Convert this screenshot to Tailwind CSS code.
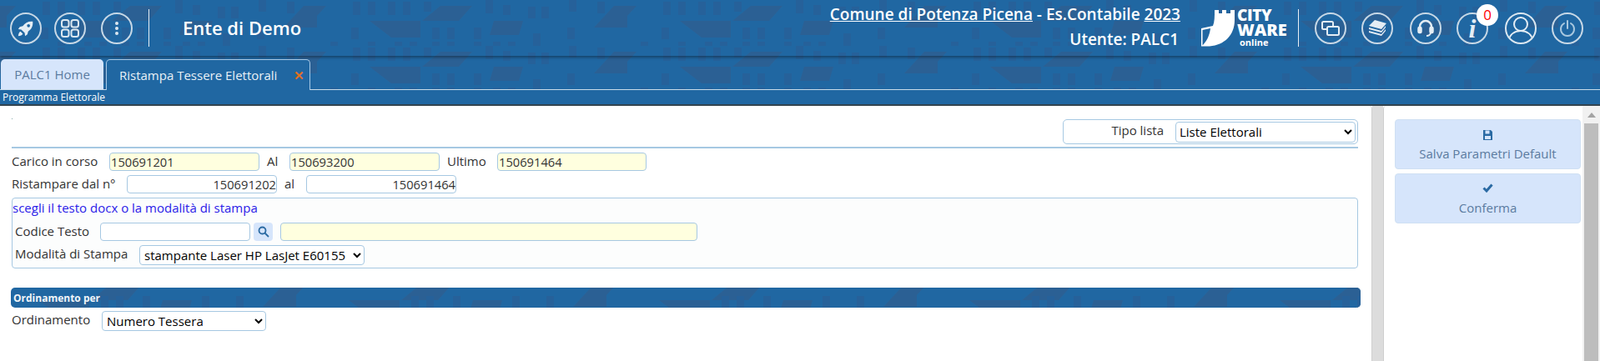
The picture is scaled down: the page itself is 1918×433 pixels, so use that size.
<!DOCTYPE html>
<html lang="it"><head><meta charset="utf-8"><title>Ristampa Tessere Elettorali</title>
<script src="https://cdn.jsdelivr.net/npm/@tailwindcss/browser@4"></script></head>
<body class="h-[433px] w-[1918px] overflow-hidden bg-white font-['Open_Sans',sans-serif] text-[15px] text-[#333]">
<div class="relative h-[127px] bg-[#2067a2] border-b-2 border-[#33444f] overflow-hidden">
  <svg class="absolute inset-0" width="1918" height="107">
    <defs>
      <pattern id="citta" x="8" y="0" width="372" height="55" patternUnits="userSpaceOnUse">
        <path fill="#2b6094" d="M148 7h38l-16 18h-44zM356 7h43l-24 26h-43zM-16 7h27l-24 26h-20zM63 25h61v20H89zM212 25h35l-5 17h-35z"/>
        <path fill="#26619a" d="M43 2h9v16h-9zM61 2h9v16h-9zM85 2h9v16h-9zM103 2h9v16h-9zM128 2h9v12h-9zM202 0h9v16h-9zM223 6h9v12h-9zM253 8h9v14h-9zM269 8h9v14h-9zM302 0h9v14h-9zM336 2h9v14h-9zM41 33h9v14h-9zM138 33h9v14h-9zM156 33h9v14h-9zM188 33h9v14h-9zM259 40h9v10h-9zM300 33h9v14h-9zM16 50h9v5h-9zM61 50h9v5h-9zM93 50h9v5h-9zM111 50h9v5h-9zM138 50h9v5h-9zM156 50h9v5h-9zM188 50h9v5h-9zM211 50h9v5h-9zM229 50h9v5h-9zM259 50h9v5h-9z"/>
      </pattern>
    </defs>
    <rect width="1918" height="107" fill="url(#citta)"/>
  </svg>
  <div class="relative flex h-[67px] items-center shadow-[0_2px_3px_rgba(0,0,0,0.35)]">
    <div class="flex w-[178px] pl-[12px]">
      <span class="flex h-[38px] w-[38px] items-center justify-center rounded-full border-2 border-[#c7d8e6]"><svg width="22" height="22" viewBox="0 0 24 24" fill="#e4edf4"><path d="M21 3c-6-.5-10 1.500-13 6l-4 1-2 3 4 .5 4.500 4.500.5 4 3-2 1-4c4.500-3 6.500-7 6-13z"/><circle cx="15.500" cy="8.500" r="2" fill="#2067a2"/><path d="M5 16c-2 1-2.500 3-3 6 3-.5 5-1 6-3z"/></svg></span>
      <span class="ml-[15px] flex h-[38px] w-[38px] items-center justify-center rounded-full border-2 border-[#c7d8e6]"><svg width="24" height="24" viewBox="0 0 24 24" fill="none" stroke="#dbe7f0" stroke-width="2"><rect x="2" y="2" width="8.500" height="8.500" rx="2.500"/><rect x="13.500" y="2" width="8.500" height="8.500" rx="2.500"/><rect x="2" y="13.500" width="8.500" height="8.500" rx="2.500"/><rect x="13.500" y="13.500" width="8.500" height="8.500" rx="2.500"/></svg></span>
      <span class="ml-[18px] flex h-[38px] w-[38px] items-center justify-center rounded-full border-2 border-[#c7d8e6]"><svg width="6" height="18" viewBox="0 0 6 18" fill="#dbe7f0"><circle cx="3" cy="3" r="2"/><circle cx="3" cy="9" r="2"/><circle cx="3" cy="15" r="2"/></svg></span>
    </div>
    <div class="h-[45px] w-px bg-[#e8eff5]"></div>
    <div class="ml-[40px] text-[22px] font-semibold text-white">Ente di Demo</div>
    <div class="ml-auto mr-[25px] mb-[3px] text-right text-[19px] leading-[30px] font-semibold text-white">
      <div><span class="underline">Comune di Potenza Picena</span> - Es.Contabile <span class="underline">2023</span></div>
      <div class="pr-[2px]">Utente: PALC1</div>
    </div>
    <div class="relative flex h-[50px] w-[100px] items-center">
      <svg width="40" height="44" viewBox="0 0 40 44" fill="#fff" class="shrink-0"><path d="M16 0h5v4h4V0h5v4h5V0h5v12C40 30 28 42 10 43.500H0V22l14-3c2-5 2-11 2-19z"/><path d="M1.500 24l9.500-2c-1 8-4 15-9.500 20.500z" fill="#2067a2"/></svg>
      <div class="ml-[3px] font-extrabold text-white">
        <div class="text-[19px] leading-[17px] tracking-[-0.4px]">CITY</div>
        <div class="text-[20px] leading-[17px]">WARE</div>
        <div class="ml-[3px] text-[11px] leading-[13px] font-bold">online</div>
      </div>
    </div>
    <div class="ml-[16px] h-[45px] w-px bg-[#e8eff5]"></div>
    <div class="mr-[20px] flex pl-[19px]">
      <span class="flex h-[38px] w-[38px] items-center justify-center rounded-full border-2 border-[#c7d8e6]"><svg width="22" height="20" viewBox="0 0 22 20" fill="none" stroke="#e4edf4" stroke-width="2"><rect x="1" y="2" width="13" height="9" rx="1.500"/><rect x="7" y="8" width="14" height="10" rx="1.500" fill="#2067a2"/></svg></span>
      <span class="ml-[18px] flex h-[38px] w-[38px] items-center justify-center rounded-full border-2 border-[#c7d8e6]"><svg width="24" height="22" viewBox="0 0 24 22" fill="#e4edf4"><path d="M9 1l14 4-6 7L2 8z"/><path d="M2 10l15 4 5-6v2l-5 6-15-4zM2 14l15 4 5-6v2l-5 6-15-4z"/></svg></span>
      <span class="ml-[20px] flex h-[38px] w-[38px] items-center justify-center rounded-full border-2 border-[#c7d8e6]"><svg width="22" height="24" viewBox="0 0 22 24" fill="none" stroke="#e4edf4" stroke-width="2.500"><path d="M4 13V10a7 7 0 0 1 14 0v3"/><rect x="2.500" y="11" width="3" height="6" rx="1" fill="#e4edf4"/><rect x="16.500" y="11" width="3" height="6" rx="1" fill="#e4edf4"/><path d="M17 17c0 3-3 4-5 4" stroke-width="2"/></svg></span>
      <span class="relative ml-[18px] flex h-[38px] w-[38px] items-center justify-center rounded-full border-2 border-[#c7d8e6] font-['Liberation_Serif',serif] text-[32px] font-bold italic text-[#e4edf4]">i<span class="absolute left-[22px] top-[-12px] flex h-[26px] w-[26px] items-center justify-center rounded-full bg-white font-['Open_Sans',sans-serif] text-[17px] font-normal not-italic text-[#f00]">0</span></span>
      <span class="ml-[20px] flex h-[38px] w-[38px] items-center justify-center overflow-hidden rounded-full border-2 border-[#dbe7f0]"><svg width="34" height="34" viewBox="0 0 34 34" fill="none" stroke="#e4edf4" stroke-width="2"><circle cx="17" cy="12" r="8"/><path d="M2 32c2-8 8-12 15-12s13 4 15 12"/></svg></span>
      <span class="ml-[18px] flex h-[38px] w-[38px] items-center justify-center rounded-full border-2 border-[#c7d8e6]"><svg width="22" height="22" viewBox="0 0 22 22" fill="none" stroke="#a9c8df" stroke-width="2" stroke-linecap="round"><path d="M7 5a8 8 0 1 0 8 0M11 2v9"/></svg></span>
    </div>
  </div>
  <div class="relative flex h-[40px] items-end pl-[1px]">
    <div class="flex h-[36px] w-[123px] items-center justify-center rounded-t-[5px] bg-[#d6e5fb] text-[15px] text-[#5b7ba0]">PALC1 Home</div>
    <div class="relative z-10 ml-[3px] mb-[-1px] flex h-[37px] w-[245px] items-center rounded-t-[5px] border border-b-0 border-[#a5c8e6] bg-[#2067a2] pl-[15px] text-[15px] text-[#e8f0f6]">Ristampa Tessere Elettorali<span class="ml-[20px] text-[15px] font-bold text-[#e2701f]">✕</span></div>
  </div>
  <div class="relative h-px bg-[#c9dcea]"></div>
  <div class="relative pl-[3px] text-[12px] leading-[18px] text-white">Programma Elettorale</div>
</div>
<div class="flex h-[306px]">
  <main class="relative w-[1645px] shrink-0 rounded-tr-[4px] border-r border-[#cfcfcf] pl-[14px] pr-[16px]">
    <div class="pt-[16px] h-[49px] relative">
      <div class="absolute left-0 top-[15px] h-px w-px bg-[#8aa]"></div>
      <div class="ml-auto flex h-[30px] w-[354px] items-center rounded-[5px] border border-[#a6c8e2] pr-[2px]">
        <span class="ml-auto mb-[3px] mr-[14px]">Tipo lista</span>
        <select class="h-[25px] w-[216px] rounded-[4px] border border-[#a6c8e2] bg-white pl-0 text-[15px] text-black"><option>Liste Elettorali</option></select>
      </div>
    </div>
    <div class="h-[2px] bg-[#a6c8e2]"></div>
    <div class="mt-[5px] flex h-[22px] items-center">
      <span class="mb-[2px] w-[117px]">Carico in corso</span>
      <input value="150691201" class="h-[22px] w-[180px] rounded-[4px] border border-[#a6c8e2] bg-[#ffffdf] pl-px text-[14.700px]">
      <span class="mb-[2px] ml-[9px] w-[27px]">Al</span>
      <input value="150693200" class="h-[22px] w-[180px] rounded-[4px] border border-[#a6c8e2] bg-[#ffffdf] pl-px text-[14.700px]">
      <span class="mb-[2px] ml-[9px] w-[60px]">Ultimo</span>
      <input value="150691464" class="h-[22px] w-[179px] rounded-[4px] border border-[#a6c8e2] bg-[#ffffdf] pl-px text-[14.700px]">
    </div>
    <div class="mt-[5px] flex h-[22px] items-center">
      <span class="mb-px w-[138px]">Ristampare dal n°</span>
      <input value="150691202" class="h-[22px] w-[180px] rounded-[4px] border border-[#a6c8e2] bg-white pr-0 text-right text-[14.700px]">
      <span class="mb-px ml-[9px] w-[26px]">al</span>
      <input value="150691464" class="h-[22px] w-[180px] rounded-[4px] border border-[#a6c8e2] bg-white pr-0 text-right text-[14.700px]">
    </div>
    <section class="mt-[5px] h-[85px] rounded-[4px] border border-[#a6c8e2] bg-[#fcfdfd]">
      <div class="pt-px leading-[20px] text-[#2a20e8]">scegli il testo docx o la modalità di stampa</div>
      <div class="mt-[8px] flex h-[22px] items-center pl-[3px]">
        <span class="mb-[2px] w-[102px]">Codice Testo</span>
        <input class="h-[22px] w-[180px] rounded-[4px] border border-[#a6c8e2] bg-white">
        <span class="ml-[4px] flex h-[22px] w-[23px] items-center justify-center rounded-[4px] bg-[#d6e5fb]"><svg width="14" height="14" viewBox="0 0 14 14" fill="none" stroke="#2a6aa3" stroke-width="1.800"><circle cx="5.500" cy="5.500" r="4"/><path d="M8.500 8.500l4.500 4.500"/></svg></span>
        <input class="ml-[9px] h-[22px] w-[500px] rounded-[4px] border border-[#a6c8e2] bg-[#ffffdf]">
      </div>
      <div class="mt-[5px] flex h-[24px] items-center pl-[3px]">
        <span class="mb-[4px] w-[149px]">Modalità di Stampa</span>
        <select class="h-[24px] w-[270px] rounded-[4px] border border-[#a6c8e2] bg-white pl-px text-[15px] text-black"><option>stampante Laser HP LasJet E60155</option></select>
      </div>
    </section>
    <div class="ml-[-1px] mr-[-3px] mt-[23px] relative h-[24px] overflow-hidden rounded-[5px] bg-[#2067a2] pl-[3px] text-[12px] leading-[25px] font-bold text-[#f0f5f9]">
      <svg class="absolute inset-0" width="1618" height="24">
        <defs><pattern id="fascia" x="-30" y="-10" width="372" height="55" patternUnits="userSpaceOnUse">
          <path fill="#2b6094" d="M148 7h38l-16 18h-44zM356 7h43l-24 26h-43zM-16 7h27l-24 26h-20zM63 25h61v20H89zM212 25h35l-5 17h-35z"/>
          <path fill="#26619a" d="M138 20h9v14h-9zM156 20h9v14h-9zM188 20h9v14h-9zM259 20h9v14h-9zM300 20h9v14h-9z"/>
        </pattern></defs>
        <rect width="1618" height="24" fill="url(#fascia)"/>
      </svg>
      <span class="relative">Ordinamento per</span>
    </div>
    <div class="mt-[4px] flex h-[24px] items-center">
      <span class="mb-[3px] w-[108px]">Ordinamento</span>
      <select class="h-[24px] w-[197px] rounded-[4px] border border-[#a6c8e2] bg-white pl-px text-[15px] text-black"><option>Numero Tessera</option></select>
    </div>
  </main>
  <div class="w-[13px] shrink-0 bg-[#dcdcdc]"></div>
  <aside class="flex w-[260px] rounded-tl-[4px] border-l border-[#cfcfcf]">
    <div class="flex w-[238px] flex-col gap-[5px] pl-[13px] pt-[16px]">
      <button class="flex h-[60px] w-[223px] flex-col items-center justify-center rounded-[4px] border border-[#cfe0f3] bg-[#d6e5fb] pt-[4px] text-[15px] text-[#5b7ba0]"><svg width="13" height="14" viewBox="0 0 13 14" fill="#2a6aa3"><path d="M1 1h9l2 2v10H1z"/><path d="M3.500 1.500h5v4h-5zM3 8h7v4H3z" fill="#d6e5fb"/></svg><span class="mt-[4px]">Salva Parametri Default</span></button>
      <button class="flex h-[60px] w-[223px] flex-col items-center justify-center rounded-[4px] border border-[#cfe0f3] bg-[#d6e5fb] pt-[4px] text-[15px] text-[#5b7ba0]"><svg width="13" height="11" viewBox="0 0 13 11" fill="none" stroke="#2a6aa3" stroke-width="3"><path d="M1.500 5.500l3.500 3.500 6.500-7.500"/></svg><span class="mt-[7px]">Conferma</span></button>
    </div>
    <div class="w-[21px] bg-[#f1f1f1]">
      <div class="flex h-[21px] items-center justify-center"><span class="h-0 w-0 border-x-[5px] border-b-[6px] border-x-transparent border-b-[#a3a3a3]"></span></div>
      <div class="ml-[2px] h-[285px] w-[17px] bg-[#bdbdbd]"></div>
    </div>
  </aside>
</div>
</body></html>
